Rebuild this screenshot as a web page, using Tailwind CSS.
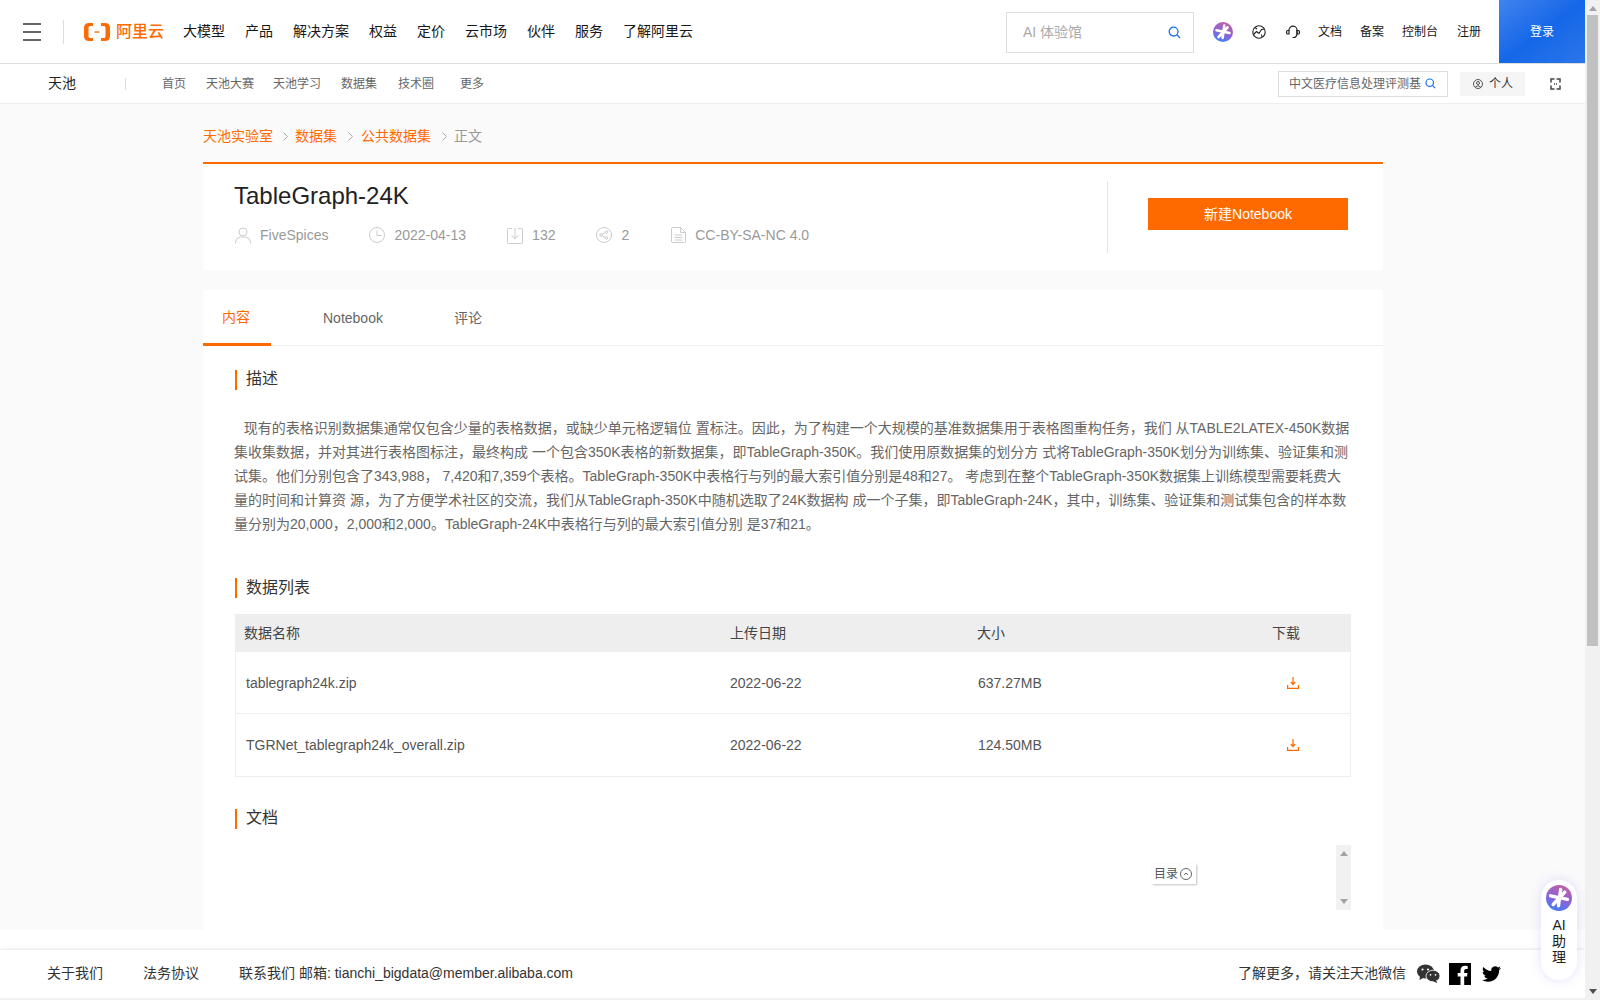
<!DOCTYPE html>
<html lang="zh-CN">
<head>
<meta charset="utf-8">
<title>TableGraph-24K</title>
<script src="https://cdn.jsdelivr.net/npm/@tailwindcss/browser@4"></script>
</head>
<body class="font-['Liberation_Sans','Noto_Sans_CJK_SC',sans-serif] bg-white overflow-hidden">
<div class="flex h-[1000px] w-[1600px] overflow-hidden relative">
  <div class="w-[1585px] flex flex-col">
    <!-- top nav -->
    <header class="h-[64px] shrink-0 border-b border-[#ddd] bg-white flex items-center text-[#181818]">
      <button class="ml-[23px] w-[18px] h-[18px] flex flex-col justify-between">
        <span class="block h-[2px] bg-[#666]"></span><span class="block h-[2px] bg-[#666]"></span><span class="block h-[2px] bg-[#666]"></span>
      </button>
      <span class="ml-[22px] w-px h-[24px] bg-[#ddd]"></span>
      <svg class="ml-[20px]" width="26" height="18" viewBox="0 0 26 18" fill="#ff6a00"><path d="M9 0H5Q0 0 0 5V13Q0 18 5 18H9V15H6.200Q4.500 15 4.500 13.500V4.500Q4.500 3 6.200 3H9Z"/><path d="M17 0H21Q26 0 26 5V13Q26 18 21 18H17V15H19.800Q21.500 15 21.500 13.500V4.500Q21.500 3 19.800 3H17Z"/><rect x="10.500" y="8.400" width="5" height="1.300"/></svg>
      <span class="ml-[6px] text-[16px] leading-[18px] font-medium text-[#ff6a00] w-[48px]">阿里云</span>
      <nav class="ml-[19px] flex gap-[20px] text-[14px] whitespace-nowrap">
        <a>大模型</a><a>产品</a><a>解决方案</a><a>权益</a><a>定价</a><a>云市场</a><a>伙伴</a><a>服务</a><a>了解阿里云</a>
      </nav>
      <div class="ml-auto flex items-center">
        <div class="mt-[2px] w-[188px] h-[41px] border border-[#ddd] flex items-center pl-[16px] pr-[12px] text-[14px] text-[#aaa]">
          <span class="flex-1">AI 体验馆</span>
          <svg width="13" height="13" viewBox="0 0 13 13" fill="none" stroke="#1b6fe8" stroke-width="1.3"><circle cx="5.6" cy="5.6" r="4.4"/><path d="M9 9l3 3"/></svg>
        </div>
        <svg class="ml-[19px]" width="20" height="20" viewBox="0 0 20 20"><defs><linearGradient id="a1" x1="0.7" y1="0" x2="0.3" y2="1"><stop offset="0" stop-color="#c2609f"/><stop offset="0.55" stop-color="#8a64d8"/><stop offset="1" stop-color="#3f7ef8"/></linearGradient></defs><circle cx="10" cy="10" r="10" fill="url(#a1)"/><path d="M11.300 3.500L9.600 16M3.500 8.300L16.500 11M5.500 15L14.500 5.500" stroke="#fff" stroke-width="2.600" stroke-linecap="round"/></svg>
        <svg class="ml-[19px]" width="14" height="14" viewBox="0 0 14 14" fill="none" stroke="#222" stroke-width="1.100"><circle cx="7" cy="7" r="6.200"/><path d="M1.500 9.500L4.500 6.500L7 8.500L9.500 4.500L12.500 4M3 2.500L5 4M10 12L9.500 9.500"/></svg>
        <svg class="ml-[20px]" width="14" height="14" viewBox="0 0 14 14" fill="none" stroke="#222" stroke-width="1.200"><path d="M3 5.500V5.200a4 4 0 018 0V9a3.500 3.500 0 01-3.500 3.500H6.500"/><path d="M3 5.500H1.500Q.6 5.500.6 6.500V8Q.6 9 1.500 9H3ZM11 5.500H12.500Q13.400 5.500 13.400 6.500V8Q13.400 9 12.500 9H11Z"/></svg>
        <div class="ml-[18px] flex gap-[18px] text-[12px] text-[#181818] whitespace-nowrap">
          <a>文档</a><a>备案</a><a>控制台</a><a class="ml-px">注册</a>
        </div>
        <button class="ml-[18px] w-[86px] h-[63px] text-[12px] text-white bg-gradient-to-br from-[#3f83ee] via-[#1567e8] to-[#2a76ea]">登录</button>
      </div>
    </header>
    <!-- sub nav -->
    <div class="h-[40px] shrink-0 border-b border-[#eee] bg-white flex items-center text-[12px] text-[#666]">
      <span class="ml-[48px] text-[14px] text-[#222]">天池</span>
      <span class="ml-[49px] w-px h-[12px] bg-[#ddd]"></span>
      <a class="ml-[36px]">首页</a><a class="ml-[20px]">天池大赛</a><a class="ml-[19px]">天池学习</a><a class="ml-[20px]">数据集</a><a class="ml-[21px]">技术圈</a><a class="ml-[26px]">更多</a>
      <div class="ml-auto w-[170px] h-[26px] border border-[#ddd] flex items-center pl-[10px] pr-[11px]">
        <span class="w-[132px] overflow-hidden whitespace-nowrap">中文医疗信息处理评测基</span>
        <svg class="ml-auto" width="11" height="11" viewBox="0 0 13 13" fill="none" stroke="#1b6fe8" stroke-width="1.400"><circle cx="5.600" cy="5.600" r="4.400"/><path d="M9 9l3 3"/></svg>
      </div>
      <div class="ml-[12px] w-[65px] h-[24px] bg-[#f5f5f5] flex items-center pl-[13px] text-[#333]">
        <svg width="10" height="10" viewBox="0 0 10 10" fill="none" stroke="#444" stroke-width="0.900"><circle cx="5" cy="5" r="4.500"/><circle cx="5" cy="4" r="1.500"/><path d="M2.300 8Q5 5.400 7.700 8"/></svg>
        <span class="ml-[6px]">个人</span>
      </div>
      <svg class="ml-[25px] mr-[24px]" width="11" height="12" viewBox="0 0 11 12" fill="none" stroke="#444" stroke-width="1.500"><path d="M1 4.500V1H4.500M6.500 1H10V4.500M1 7.500V11H4.500M6.500 11H10V7.500"/><path d="M4 6H7" stroke-dasharray="1 1"/></svg>
    </div>
    <!-- main -->
    <main class="h-[826px] shrink-0 bg-[#fafafa] overflow-hidden">
      <div class="ml-[203px] w-[1180px]">
        <div class="h-[58px] flex items-center text-[14px] text-[#ff6a00] pt-[6px]">
          <a>天池实验室</a>
          <svg class="ml-[10px] mr-[7px]" width="5" height="9" viewBox="0 0 5 9" fill="none" stroke="#aaa"><path d="M.5.5l4 4-4 4"/></svg>
          <a>数据集</a>
          <svg class="ml-[11px] mr-[8px]" width="5" height="9" viewBox="0 0 5 9" fill="none" stroke="#aaa"><path d="M.5.5l4 4-4 4"/></svg>
          <a>公共数据集</a>
          <svg class="ml-[11px] mr-[7px]" width="5" height="9" viewBox="0 0 5 9" fill="none" stroke="#aaa"><path d="M.5.5l4 4-4 4"/></svg>
          <span class="text-[#999]">正文</span>
        </div>
        <!-- info card -->
        <section class="h-[108px] bg-white border-t-2 border-[#ff6a00] flex">
          <div class="w-[904px] pl-[32px] pt-[16px]">
            <h1 class="-ml-px text-[24px] leading-[32px] text-[#222]">TableGraph-24K</h1>
            <div class="mt-[11px] h-[24px] flex items-center gap-[41px] text-[14px] text-[#999] whitespace-nowrap">
              <span class="flex items-center gap-[9px]"><svg width="16" height="17" viewBox="0 0 16 17" fill="none" stroke="#ccc"><circle cx="8" cy="5" r="4"/><path d="M.5 16.500V15Q1 10.500 5.500 10H10.500Q15 10.500 15.500 15V16.500"/></svg>FiveSpices</span>
              <span class="flex items-center gap-[9px]"><svg width="16" height="16" viewBox="0 0 16 16" fill="none" stroke="#ccc"><circle cx="8" cy="8" r="7.500"/><path d="M8 3.500V8.500H12.500"/></svg>2022-04-13</span>
              <span class="flex items-center gap-[9px]"><svg width="16" height="17" viewBox="0 0 16 17" fill="none" stroke="#ccc"><path d="M5 1.500H1.500Q.5 1.500.5 2.500V15.500Q.5 16.500 1.500 16.500H14.500Q15.500 16.500 15.500 15.500V2.500Q15.500 1.500 14.500 1.500H11M8 1V11M4.500 8L8 12L11.500 8"/></svg>132</span>
              <span class="flex items-center gap-[9px]"><svg width="16" height="16" viewBox="0 0 16 16" fill="none" stroke="#ccc"><circle cx="8" cy="8" r="7.500"/><circle cx="5" cy="8" r="1.300"/><circle cx="10.500" cy="5" r="1.300"/><circle cx="10.500" cy="11" r="1.300"/><path d="M6.200 7.300L9.300 5.700M6.200 8.700L9.300 10.300"/></svg>2</span>
              <span class="ml-[1px] flex items-center gap-[9px]"><svg width="15" height="16" viewBox="0 0 15 16" fill="none" stroke="#ccc"><path d="M.5 1.500Q.5.500 1.500.500H9.500L14.500 5.500V14.500Q14.500 15.500 13.500 15.500H1.500Q.5 15.500.5 14.500ZM9.500.5V5.500H14.500M3.500 8H11.500M3.500 10.500H11.500M3.500 13H11.500"/></svg>CC-BY-SA-NC 4.0</span>
            </div>
          </div>
          <div class="mt-[17px] h-[72px] flex-1 border-l border-[#e3e3e3] pl-[40px] pt-[17px]">
            <button class="w-[200px] h-[32px] bg-[#ff6a00] text-white text-[14px]">新建Notebook</button>
          </div>
        </section>
        <!-- content card -->
        <section class="mt-[20px] bg-white h-[640px] overflow-hidden">
          <div class="h-[56px] border-b border-[#eee] flex text-[14px] text-[#666]">
            <a class="w-[68px] h-[56px] border-b-[3px] border-[#ff6a00] text-[#ff6a00] flex items-center justify-center pt-[1px] pr-[2px]">内容</a>
            <a class="ml-[52px] h-[54px] flex items-center pt-[2px]">Notebook</a>
            <a class="ml-[71px] h-[54px] flex items-center pt-[2px]">评论</a>
          </div>
          <div class="px-[32px]">
            <h2 class="mt-[24px] h-[20px] border-l-2 border-[#ff6a00] pl-[9px] text-[16px] leading-[18px] text-[#333]">描述</h2>
            <p class="-ml-px mt-[26px] text-[14px] leading-[24px] text-[#666] whitespace-nowrap"><span class="ml-[2px]">&nbsp;&nbsp;</span>现有的表格识别数据集通常仅包含少量的表格数据，或缺少单元格逻辑位 置标注。因此，为了构建一个大规模的基准数据集用于表格图重构任务，我们 从TABLE2LATEX-450K数据<br>集收集数据，并对其进行表格图标注，最终构成 一个包含350K表格的新数据集，即TableGraph-350K。我们使用原数据集的划分方 式将TableGraph-350K划分为训练集、验证集和测<br>试集。他们分别包含了343,988， 7,420和7,359个表格。TableGraph-350K中表格行与列的最大索引值分别是48和27。 考虑到在整个TableGraph-350K数据集上训练模型需要耗费大<br>量的时间和计算资 源，为了方便学术社区的交流，我们从TableGraph-350K中随机选取了24K数据构 成一个子集，即TableGraph-24K，其中，训练集、验证集和测试集包含的样本数<br>量分别为20,000，2,000和2,000。TableGraph-24K中表格行与列的最大索引值分别 是37和21。</p>
            <h2 class="mt-[42px] h-[20px] border-l-2 border-[#ff6a00] pl-[9px] text-[16px] leading-[19px] text-[#333]">数据列表</h2>
            <div class="mt-[16px] text-[14px]">
              <div class="h-[38px] bg-[#eee] flex items-center pl-[9px] text-[#444]">
                <span class="w-[486px]">数据名称</span><span class="w-[247px]">上传日期</span><span class="w-[295px]">大小</span><span>下载</span>
              </div>
              <div class="h-[62px] border-x border-b border-[#eee] flex items-center pl-[9px] text-[#555]">
                <span class="ml-px w-[484px] pt-[1px]">tablegraph24k.zip</span><span class="w-[248px] pt-[1px]">2022-06-22</span><span class="w-[309px] pt-[1px]">637.27MB</span>
                <svg width="12" height="12" viewBox="0 0 12 12" fill="none" stroke="#ff6a00" stroke-width="1.200"><path d="M6 0V7M3.800 5L6 7.500L8.200 5"/><path d="M.6 8V11.300H11.400V8"/></svg>
              </div>
              <div class="h-[63px] border-x border-b border-[#eee] flex items-center pl-[9px] text-[#555]">
                <span class="ml-px w-[484px]">TGRNet_tablegraph24k_overall.zip</span><span class="w-[248px]">2022-06-22</span><span class="w-[309px]">124.50MB</span>
                <svg width="12" height="12" viewBox="0 0 12 12" fill="none" stroke="#ff6a00" stroke-width="1.200"><path d="M6 0V7M3.800 5L6 7.500L8.200 5"/><path d="M.6 8V11.300H11.400V8"/></svg>
              </div>
            </div>
            <h2 class="mt-[32px] h-[20px] border-l-2 border-[#ff6a00] pl-[9px] text-[16px] leading-[18px] text-[#333]">文档</h2>
            <div class="relative mt-[16px] h-[65px] flex justify-end">
              <div class="w-[15px] h-[65px] bg-[#f1f1f1] flex flex-col items-center justify-between py-[6px]">
                <svg width="8" height="5" viewBox="0 0 8 5"><path d="M4 0L8 5H0z" fill="#a3a3a3"/></svg>
                <svg width="8" height="5" viewBox="0 0 8 5"><path d="M0 0H8L4 5z" fill="#a3a3a3"/></svg>
              </div>
              <div class="absolute left-[917px] top-[19px] w-[44px] h-[20px] bg-white shadow-[1px_1px_2px_rgba(0,0,0,0.25)] flex items-center pl-[2px] text-[12px] text-[#555]">目录<svg class="ml-[2px]" width="12" height="12" viewBox="0 0 12 12" fill="none" stroke="#666"><circle cx="6" cy="6" r="5.500"/><path d="M4 7L6 5L8 7"/></svg></div>
            </div>
          </div>
        </section>
      </div>
    </main>
    <div class="h-[20px] shrink-0 bg-white"></div>
    <!-- footer -->
    <footer class="h-[48px] shrink-0 bg-white shadow-[0_-1px_3px_rgba(0,0,0,0.1)] flex items-center text-[14px] text-[#333] whitespace-nowrap pb-[1px]">
      <a class="ml-[47px]">关于我们</a><a class="ml-[40px]">法务协议</a><span class="ml-[40px]">联系我们 邮箱: tianchi_bigdata@member.alibaba.com</span>
      <span class="ml-auto">了解更多，请关注天池微信</span>
      <svg class="ml-[11px]" width="23" height="19" viewBox="0 0 23 19"><ellipse cx="8.500" cy="7.500" rx="8.500" ry="7" fill="#333"/><path d="M3 12L2.500 16L7 13.500z" fill="#333"/><ellipse cx="16" cy="12" rx="7" ry="5.800" fill="#333" stroke="#fff" stroke-width="0.800"/><path d="M19 16.500L20.500 19L16 17.500z" fill="#333"/><circle cx="5.500" cy="5.500" r="1.100" fill="#fff"/><circle cx="11" cy="5.500" r="1.100" fill="#fff"/><circle cx="13.500" cy="10.800" r="0.900" fill="#fff"/><circle cx="18.500" cy="10.800" r="0.900" fill="#fff"/></svg>
      <svg class="ml-[9px]" width="22" height="22" viewBox="0 0 22 22"><rect width="22" height="22" fill="#000"/><path d="M15.200 22V13.500H18L18.500 10H15.200V7.800Q15.200 6 17 6H18.700V3Q17.500 2.800 16.200 2.800Q11.500 2.800 11.500 7.500V10H8.700V13.500H11.500V22z" fill="#fff"/></svg>
      <svg class="ml-[11px] mr-[84px]" width="19" height="16" viewBox="0 0 24 20"><path transform="translate(0 -2)" d="M23.953 4.570a10 10 0 01-2.825.775 4.958 4.958 0 002.163-2.723c-.951.555-2.005.959-3.127 1.184a4.920 4.920 0 00-8.384 4.482C7.690 8.095 4.067 6.130 1.640 3.162a4.822 4.822 0 00-.666 2.475c0 1.710.870 3.213 2.188 4.096a4.904 4.904 0 01-2.228-.616v.060a4.923 4.923 0 003.946 4.827 4.996 4.996 0 01-2.212.085 4.936 4.936 0 004.604 3.417 9.867 9.867 0 01-6.102 2.105c-.390 0-.779-.023-1.170-.067a13.995 13.995 0 007.557 2.209c9.053 0 13.998-7.496 13.998-13.985 0-.210 0-.420-.015-.630A9.935 9.935 0 0024 4.590z" fill="#000"/></svg>
    </footer>
    <div class="h-[2px] shrink-0 bg-[#f1f1f1]"></div>
  </div>
  <!-- window scrollbar -->
  <aside class="w-[15px] h-[1000px] bg-[#f1f1f1] flex flex-col items-center">
    <svg class="mt-[6px]" width="8" height="5" viewBox="0 0 8 5"><path d="M4 0L8 5H0z" fill="#a3a3a3"/></svg>
    <div class="mt-[4px] w-[11px] h-[631px] bg-[#c1c1c1]"></div>
    <svg class="mt-auto mb-[6px]" width="8" height="5" viewBox="0 0 8 5"><path d="M0 0H8L4 5z" fill="#505050"/></svg>
  </aside>
  <!-- floating assistant -->
  <div class="absolute left-[1541px] top-[880px] w-[36px] h-[100px] rounded-full bg-white shadow-[0_0_12px_rgba(110,100,255,0.2)] flex flex-col items-center pt-[5px] text-[14px] leading-[16px] text-[#222]">
    <svg width="26" height="26" viewBox="0 0 20 20"><defs><linearGradient id="a2" x1="0.7" y1="0" x2="0.3" y2="1"><stop offset="0" stop-color="#c2609f"/><stop offset="0.55" stop-color="#8a64d8"/><stop offset="1" stop-color="#3f7ef8"/></linearGradient></defs><circle cx="10" cy="10" r="10" fill="url(#a2)"/><path d="M11.300 3.500L9.600 16M3.500 8.300L16.500 11M5.500 15L14.500 5.500" stroke="#fff" stroke-width="2.600" stroke-linecap="round"/></svg>
    <span class="mt-[6px]">AI</span><span>助</span><span>理</span>
  </div>
</div>
</body>
</html>
